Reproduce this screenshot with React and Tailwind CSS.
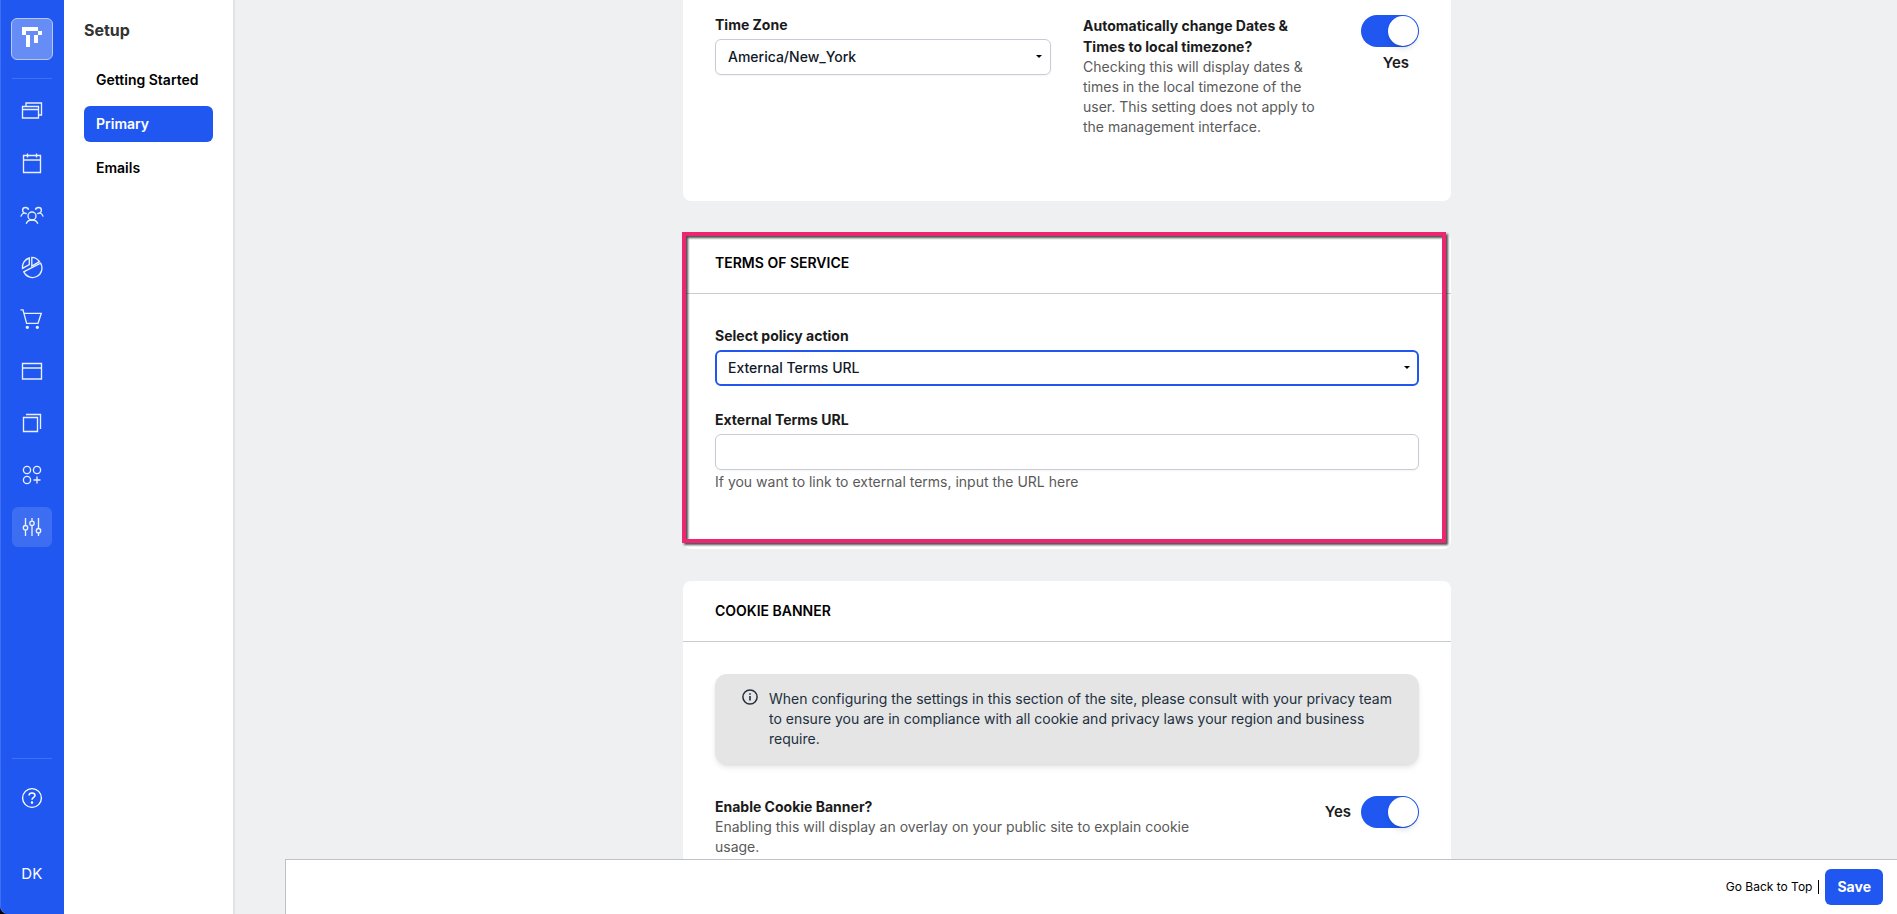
import React, { useState } from "react";

const menuItems = ["Getting Started", "Primary", "Emails"];

const railItems = [
    {
        label: "Pages",
        icon: (
            <>
                <path d="M2.5 7.5h16v11.5h-16zM2.5 10.5h16" />
                <path d="M6 7V4H21.5V16H19" />
            </>
        ),
    },
    { label: "Events", icon: <path d="M3.5 4.5h17v17h-17zM3.5 9h17M7.5 2.5v4M16.5 2.5v4" /> },
    {
        label: "People",
        icon: (
            <>
                <circle cx="12" cy="13" r="4" />
                <path d="M6.2 20.8C7 18.2 9 17 12 17s5 1.2 5.8 3.8" />
                <path d="M8.5 6.8C8.3 5.3 7 4.5 5.5 4.5 3.8 4.5 2.6 5.7 2.6 7.3c0 1.2.6 2.1 1.6 2.6C2.5 10.4 1.4 11.8.8 13.6M4.2 10c1 .5 1.8.6 2.6.4" />
                <path d="M15.5 6.8c.2-1.5 1.5-2.3 3-2.3 1.7 0 2.9 1.2 2.9 2.8 0 1.2-.6 2.1-1.6 2.6 1.7.5 2.8 1.9 3.4 3.7M19.8 10c-1 .5-1.8.6-2.6.4" />
            </>
        ),
    },
    {
        label: "Reports",
        icon: (
            <>
                <path d="M11.8 2.4A9.6 9.6 0 0 1 19.4 6.7L11.8 11Z" />
                <path d="M20.6 8.2A9.5 9.5 0 1 1 3.7 16.8Z" />
                <path d="M9.3 3A9.6 9.6 0 0 0 2.5 13.4L9.3 9.7Z" />
            </>
        ),
    },
    {
        label: "Orders",
        icon: (
            <>
                <path d="M.5 2.8H3L6.6 16.4H18L21.3 6.3H4" />
                <circle cx="7.3" cy="20.3" r="1" fill="currentColor" />
                <circle cx="17.3" cy="20.3" r="1" fill="currentColor" />
            </>
        ),
    },
    { label: "Layout", icon: <path d="M2.5 4.5h19v15.5h-19zM2.5 9h19" /> },
    { label: "Content", icon: <path d="M3.5 6.5h14v14h-14zM6 3.5h14.5V18" /> },
    {
        label: "Apps",
        icon: (
            <>
                <circle cx="7" cy="7" r="3.6" />
                <circle cx="17" cy="7" r="3.6" />
                <circle cx="7" cy="17" r="3.6" />
                <path d="M17 13.5v7M13.5 17h7" />
            </>
        ),
    },
    {
        label: "Setup",
        active: true,
        icon: (
            <>
                <path d="M5.5 3v7.5M5.5 15v6M12 3v3M12 10.5V21M18.5 3v10.5M18.5 18v3" />
                <circle cx="5.5" cy="12.7" r="2.2" />
                <circle cx="12" cy="8.3" r="2.2" />
                <circle cx="18.5" cy="15.7" r="2.2" />
            </>
        ),
    },
];

const Icon = ({ children }) => (
    <svg viewBox="0 0 24 24" className="size-6" fill="none" stroke="currentColor" strokeWidth="1.35" aria-hidden="true">
        {children}
    </svg>
);

const Logo = () => (
    <svg viewBox="0 0 20 20" className="size-5 mb-1" fill="#fff" aria-hidden="true">
        <path d="M0 0h16v4H4v4H0zM16 4h4v4h-4zM4 8h4v12H4zM12 8h4v8h-4z" />
    </svg>
);

const Rail = () => (
    <div className="bg-black shrink-0">
        <nav className="w-16 h-full flex flex-col items-center bg-[#1f57f0] text-white inset-shadow-[1px_0_0_#3f6ff2] rounded-bl-lg pt-[18px]">
            <a href="#home" aria-label="Home" className="size-[42px] flex items-center justify-center rounded-md bg-[#658df5] border border-[#bcc8ea]">
                <Logo />
            </a>
            <hr className="w-10 border-[#4171f3] mt-[18px] mb-3" />
            <div className="flex flex-col gap-3">
                {railItems.map((item) => (
                    <a
                        key={item.label}
                        href="#nav"
                        aria-label={item.label}
                        className={`size-10 flex items-center justify-center rounded-md text-[#eaf0ff] ${item.active ? "bg-[#3d6ef2]" : ""}`}
                    >
                        <Icon>{item.icon}</Icon>
                    </a>
                ))}
            </div>
            <hr className="w-10 border-[#4171f3] mt-auto" />
            <a href="#help" aria-label="Help" className="size-10 mt-[19px] flex items-center justify-center">
                <Icon>
                    <circle cx="12" cy="12" r="9.4" />
                    <path d="M9 9.6C9 7.8 10.3 7 12 7s3 .9 3 2.5c0 2-3 2-3 4.3" strokeWidth="1.5" />
                    <circle cx="12" cy="16.6" r=".6" fill="currentColor" />
                </Icon>
            </a>
            <button className="h-10 mt-9 mb-5 text-[15px] font-normal tracking-wide">DK</button>
        </nav>
    </div>
);

const Caret = () => (
    <svg viewBox="0 0 6 3" className="absolute right-[9px] top-4 w-1.5 h-[3px] pointer-events-none" aria-hidden="true">
        <path d="M0 0h6L3 3z" />
    </svg>
);

const Select = ({ id, label, options, focused }) => (
    <div>
        <label htmlFor={id} className="block leading-5 font-bold mb-1">{label}</label>
        <div className="relative">
            <select
                id={id}
                className={`block w-full h-9 appearance-none rounded-md bg-white font-medium text-[#111827] outline-none ${focused ? "px-[11px] border-2 border-[#1f57f0]" : "px-3 border border-[#c9ccd6] shadow-xs"}`}
            >
                {options.map((o) => (
                    <option key={o}>{o}</option>
                ))}
            </select>
            <Caret />
        </div>
    </div>
);

const Toggle = ({ id, checked, onChange }) => (
    <span className="relative block w-[58px] h-8 shrink-0">
        <input
            id={id}
            type="checkbox"
            role="switch"
            checked={checked}
            onChange={onChange}
            className="peer block size-full appearance-none rounded-full bg-gray-300 checked:bg-[#1f57f0]"
        />
        <span className="absolute top-px left-px size-[30px] rounded-full bg-white shadow-md pointer-events-none peer-checked:left-[27px]" />
    </span>
);

const Card = ({ title, children, className = "" }) => (
    <section className={`relative bg-white rounded-lg ${className}`}>
        <h2 className="h-[61px] px-8 flex items-center border-b border-[#c9cbcf] font-semibold text-black">{title}</h2>
        <div className="p-8">{children}</div>
    </section>
);

const App = () => {
    const [localTime, setLocalTime] = useState(true);
    const [cookieBanner, setCookieBanner] = useState(true);
    const [url, setUrl] = useState("");

    return (
        <div className="flex h-screen overflow-hidden bg-[#eff0f2] font-['Inter',sans-serif] text-sm text-[#1b1b1b]">
            <Rail />

            <aside className="w-[171px] shrink-0 bg-white border-r-2 border-[#e1e2e8] px-5 pt-[18px]">
                <h1 className="text-base leading-6 font-bold text-[#333]">Setup</h1>
                <nav className="mt-5 flex flex-col gap-2">
                    {menuItems.map((item) => (
                        <a
                            key={item}
                            href="#setup"
                            className={`h-9 px-3 flex items-center rounded-md font-semibold whitespace-nowrap ${item === "Primary" ? "bg-[#1f57f0] text-white" : "text-black"}`}
                        >
                            {item}
                        </a>
                    ))}
                </nav>
            </aside>

            <main className="flex-1 overflow-hidden pl-0.5">
                <div className="max-w-3xl mx-auto flex flex-col gap-8">
                    <section className="bg-white rounded-b-lg px-8 pt-[15px] pb-16 grid grid-cols-2 gap-8">
                        <Select id="tz" label="Time Zone" options={["America/New_York", "America/Chicago"]} />
                        <div className="flex justify-between">
                            <div className="w-60">
                                <label htmlFor="local-time" className="block leading-[21px] font-bold">
                                    Automatically change Dates &amp; Times to local timezone?
                                </label>
                                <p className="leading-5 text-[#5a5a5a]">
                                    Checking this will display dates &amp; times in the local timezone of the user. This setting does not apply to the management interface.
                                </p>
                            </div>
                            <div className="flex flex-col items-end">
                                <Toggle id="local-time" checked={localTime} onChange={() => setLocalTime(!localTime)} />
                                <span className="mt-1 mr-2.5 text-[15px] leading-6 font-semibold">{localTime ? "Yes" : "No"}</span>
                            </div>
                        </div>
                    </section>

                    <Card title="TERMS OF SERVICE" className="h-[316px]">
                        <Select id="policy" label="Select policy action" options={["External Terms URL", "None"]} focused />
                        <label htmlFor="terms-url" className="block mt-6 mb-1 leading-5 font-bold">External Terms URL</label>
                        <input
                            id="terms-url"
                            type="text"
                            value={url}
                            onChange={(e) => setUrl(e.target.value)}
                            className="block w-full h-9 px-3 rounded-md border border-[#c9ccd6] bg-white shadow-xs"
                        />
                        <p className="mt-0.5 leading-5 text-[#5a5a5a]">If you want to link to external terms, input the URL here</p>
                        {/* highlight frame over the card */}
                        <div className="absolute -top-px -left-px right-[5px] bottom-1.5 border-4 border-[#ec2670] pointer-events-none drop-shadow-[2px_2px_1px_rgba(0,0,0,0.7)]" />
                    </Card>

                    <Card title="COOKIE BANNER">
                        <div className="flex rounded-xl bg-[#e5e5e5] py-[15px] pl-[27px] pr-5 shadow-md text-[#22303e]">
                            <svg viewBox="0 0 16 16" className="size-4 mr-[11px] shrink-0" fill="none" stroke="currentColor" strokeWidth="1.5" aria-hidden="true">
                                <circle cx="8" cy="8" r="7.1" />
                                <path d="M8 7v4.5M8 4.3v1.4" strokeWidth="1.6" />
                            </svg>
                            <p className="leading-5">
                                When configuring the settings in this section of the site, please consult with your privacy team to ensure you are in compliance with all cookie and privacy laws your region and business require.
                            </p>
                        </div>
                        <div className="mt-8 flex justify-between items-start">
                            <div className="w-[500px]">
                                <label htmlFor="cookie" className="block leading-[21px] font-bold">Enable Cookie Banner?</label>
                                <p className="leading-5 text-[#5a5a5a]">
                                    Enabling this will display an overlay on your public site to explain cookie usage.
                                </p>
                            </div>
                            <div className="flex items-center gap-2.5">
                                <span className="text-[15px] leading-6 font-semibold">{cookieBanner ? "Yes" : "No"}</span>
                                <Toggle id="cookie" checked={cookieBanner} onChange={() => setCookieBanner(!cookieBanner)} />
                            </div>
                        </div>
                    </Card>
                </div>
            </main>

            <footer className="fixed bottom-0 right-0 left-[285px] h-[55px] pr-3.5 flex items-center justify-end bg-white border-t border-l border-[#c0c1c6]">
                <a href="#top" className="text-xs text-black">Go Back to Top</a>
                <span className="w-px h-3.5 mx-1.5 bg-black" />
                <button className="h-9 px-3 rounded-md bg-[#1f57f0] text-white font-bold">Save</button>
            </footer>
        </div>
    );
};

export default App;
